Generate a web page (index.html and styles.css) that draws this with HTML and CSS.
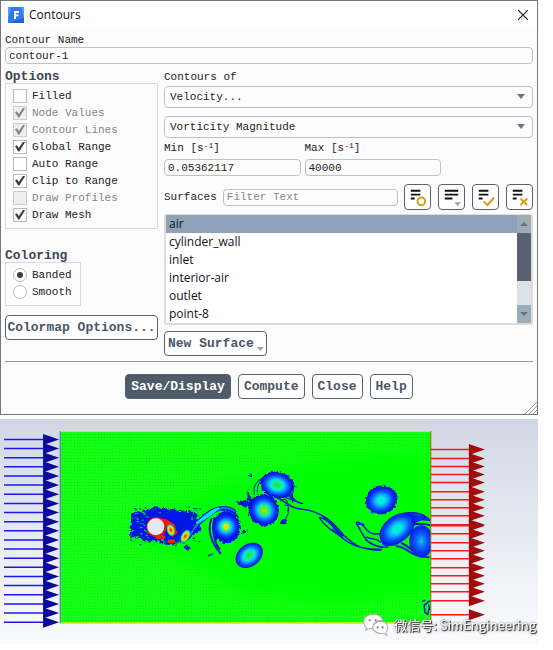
FILE: index.html
```html
<!DOCTYPE html>
<html lang="en">
<head>
<meta charset="utf-8">
<title>Contours</title>
<link rel="stylesheet" href="styles.css">
</head>
<body>
<main class="dialog">
  <header class="titlebar">
    <svg class="app-icon" viewBox="0 0 16 16" aria-hidden="true">
      <rect width="16" height="16" fill="#2f7be8"/>
      <path d="M0 0h3L0 12zM13 0h3v12z" fill="#5a9cf4"/>
      <path d="M0 16l16-5v5z" fill="#1f62c8"/>
      <path d="M6 4h5v2H8v1.500h2.500v1.800H8V12H6z" fill="#fff"/>
    </svg>
    <h1 class="title">Contours</h1>
    <button class="close" aria-label="Close window">
      <svg viewBox="0 0 10 10" width="10" height="10"><path d="M0 0l10 10M10 0L0 10" stroke="#222" stroke-width="1.200"/></svg>
    </button>
  </header>

  <form class="content">
    <label class="label" for="name">Contour Name</label>
    <input class="field" id="name" type="text" value="contour-1">

    <div class="columns">
      <div class="side">
        <h2 class="heading">Options</h2>
        <div class="group">
          <label class="check"><input type="checkbox">Filled</label>
          <label class="check off"><input type="checkbox" checked disabled>Node Values</label>
          <label class="check off"><input type="checkbox" checked disabled>Contour Lines</label>
          <label class="check"><input type="checkbox" checked>Global Range</label>
          <label class="check"><input type="checkbox">Auto Range</label>
          <label class="check"><input type="checkbox" checked>Clip to Range</label>
          <label class="check off"><input type="checkbox" disabled>Draw Profiles</label>
          <label class="check"><input type="checkbox" checked>Draw Mesh</label>
        </div>
        <h2 class="heading coloring">Coloring</h2>
        <div class="group fit">
          <label class="check"><input type="radio" name="coloring" checked>Banded</label>
          <label class="check"><input type="radio" name="coloring">Smooth</label>
        </div>
        <button type="button" class="button colormap">Colormap Options...</button>
      </div>

      <div class="main">
        <label class="label" for="of">Contours of</label>
        <div class="dropdown"><select id="of"><option>Velocity...</option></select></div>
        <div class="dropdown"><select aria-label="Quantity"><option>Vorticity Magnitude</option></select></div>
        <div class="range">
          <div class="cell"><label class="label" for="min">Min [s<sup>-1</sup>]</label><input class="field" id="min" type="text" value="0.05362117"></div>
          <div class="cell"><label class="label" for="max">Max [s<sup>-1</sup>]</label><input class="field" id="max" type="text" value="40000"></div>
        </div>
        <div class="surfaces">
          <label class="label" for="filter">Surfaces</label>
          <input class="field filter" id="filter" type="text" placeholder="Filter Text">
          <div class="tools">
            <button type="button" class="tool" aria-label="Toggle shown"><svg viewBox="0 0 26 26"><path d="M6 6h10M6 10h10M6 14h4" class="bars"/><circle cx="17" cy="17" r="4" class="gold"/></svg></button>
            <button type="button" class="tool" aria-label="List options"><svg viewBox="0 0 26 26"><path d="M6 6h14M6 10h14M6 14h8" class="bars"/><path d="M16 18h7l-3.500 4z" fill="#9aa3ae"/></svg></button>
            <button type="button" class="tool" aria-label="Select all"><svg viewBox="0 0 26 26"><path d="M6 6h10M6 10h10M6 14h4" class="bars"/><path d="M11 17l4 4 7-8" class="gold"/></svg></button>
            <button type="button" class="tool" aria-label="Deselect all"><svg viewBox="0 0 26 26"><path d="M6 6h10M6 10h10M6 14h4" class="bars"/><path d="M14 14l7 7M21 14l-7 7" class="gold"/></svg></button>
          </div>
        </div>
        <div class="list">
          <ul class="items" role="listbox" aria-label="Surfaces">
            <li role="option" aria-selected="true">air</li>
            <li role="option">cylinder_wall</li>
            <li role="option">inlet</li>
            <li role="option">interior-air</li>
            <li role="option">outlet</li>
            <li role="option">point-8</li>
          </ul>
          <div class="scroll" aria-hidden="true">
            <div class="arrow"></div><div class="thumb"></div><div class="track"></div><div class="arrow down"></div>
          </div>
        </div>
        <button type="button" class="button menu">New Surface</button>
      </div>
    </div>

    <footer class="actions">
      <button type="button" class="button primary">Save/Display</button>
      <button type="button" class="button">Compute</button>
      <button type="button" class="button">Close</button>
      <button type="button" class="button">Help</button>
    </footer>
  </form>
  <svg class="grip" viewBox="0 0 12 12" aria-hidden="true"><path d="M0 12L12 0M4 12l8-8M8 12l4-4" stroke="#999" fill="none"/></svg>
</main>

<svg class="plot" viewBox="0 419 537 225" role="img" aria-label="Vorticity contours behind a cylinder">
  <defs>
    <linearGradient id="sky" x2="0" y2="1"><stop offset="0" stop-color="#d1d7e5"/><stop offset=".75" stop-color="#f1f3f8"/><stop offset="1" stop-color="#fafbfd"/></linearGradient>
    <radialGradient id="hot"><stop offset="0" stop-color="#ffb000"/><stop offset=".14" stop-color="#f4ee00"/><stop offset=".28" stop-color="#50f060"/><stop offset=".42" stop-color="#00d8ff"/><stop offset=".6" stop-color="#1478ff"/><stop offset=".78" stop-color="#0a30ff"/><stop offset="1" stop-color="#0010e0"/></radialGradient>
    <radialGradient id="warm"><stop offset="0" stop-color="#a0f000"/><stop offset=".25" stop-color="#60e830"/><stop offset=".42" stop-color="#00e0e8"/><stop offset=".62" stop-color="#1478ff"/><stop offset=".8" stop-color="#0a30ff"/><stop offset="1" stop-color="#0010e0"/></radialGradient>
    <radialGradient id="mild"><stop offset="0" stop-color="#10e830"/><stop offset=".2" stop-color="#20ec60"/><stop offset=".42" stop-color="#00e8f0"/><stop offset=".65" stop-color="#1478ff"/><stop offset=".85" stop-color="#0a30ff"/><stop offset="1" stop-color="#0010d0"/></radialGradient>
    <radialGradient id="cool"><stop offset="0" stop-color="#00f0b0"/><stop offset=".22" stop-color="#00f0e8"/><stop offset=".45" stop-color="#10a8ff"/><stop offset=".7" stop-color="#0a50ff"/><stop offset="1" stop-color="#0010e0"/></radialGradient>
    <radialGradient id="cold"><stop offset="0" stop-color="#20e040"/><stop offset=".12" stop-color="#10a0ff"/><stop offset=".5" stop-color="#0a58ff"/><stop offset="1" stop-color="#0018e0"/></radialGradient>
    <radialGradient id="core"><stop offset="0" stop-color="#ff2000"/><stop offset=".35" stop-color="#ff9000"/><stop offset=".6" stop-color="#e8f000"/><stop offset=".82" stop-color="#20e870"/><stop offset="1" stop-color="#00a0ff"/></radialGradient>
    <pattern id="mesh" width="3" height="3" patternUnits="userSpaceOnUse"><rect width="1" height="1" fill="#fff" opacity=".3"/><rect y="1" width="3" height="1" fill="#fff" opacity=".1"/></pattern>
    <mask id="edges">
      <rect x="60" y="431" width="370" height="192" fill="#fff"/>
      <path d="M118 527L240 478 340 455 430 450V592L340 604 240 592z" fill="#000" filter="url(#soft)"/>
    </mask>
    <clipPath id="domain"><rect x="60" y="431" width="370" height="192"/></clipPath>
    <filter id="soft" x="-10%" y="-20%" width="120%" height="140%"><feGaussianBlur stdDeviation="8"/></filter>
    <filter id="rough" x="-10%" y="-10%" width="120%" height="120%"><feTurbulence type="fractalNoise" baseFrequency=".35" numOctaves="2" seed="4"/><feDisplacementMap in="SourceGraphic" scale="5" xChannelSelector="R" yChannelSelector="G"/></filter>
  </defs>
  <rect y="419" width="537" height="225" fill="url(#sky)"/>
  <g id="inlet"></g>
  <g id="outlet"></g>
  <rect x="60" y="431" width="370" height="192" fill="#00ff00"/>
  <rect x="60" y="431" width="370" height="192" fill="url(#mesh)" mask="url(#edges)"/>
  <g clip-path="url(#domain)">
    <g filter="url(#rough)">
      <path d="M131 513l15-3 8-3 11 1 17 2 14 2 2 9 3 9-4 3-9 3-6 6-15 3-10-4-10 0-11-3-6 0z" fill="#0018e8"/>
      <ellipse cx="226" cy="527" rx="14" ry="16" fill="#0018e8"/>
      <ellipse cx="263" cy="510" rx="15" ry="16" fill="#0018e8" transform="rotate(-35 263 510)"/>
      <ellipse cx="277" cy="485" rx="17" ry="13" fill="#0018e8" transform="rotate(15 277 485)"/>
      <ellipse cx="381" cy="500" rx="16" ry="14" fill="#0018e8" transform="rotate(-20 381 500)"/>
      <path d="M235 501l10-1 7 4-8 4zM247 489l4 10 4 4-8-2zM280 519l6 0-1 6-5-2zM240 532l8-3-3 5zM207 554h6v2h-6zM184 545l7 2-2 4-4-2zM249 474h3v3h-3z" fill="#0018d0"/>
    </g>
    <g id="specks"></g>
    <g fill="none" stroke="#0820c8" stroke-linecap="round">
      <path d="M211 519c-4 10-1 23 9 34M214 518c-3 12 0 24 5 31M222 510c5-2 10 1 15 6" stroke-width="2"/>
      <path d="M254 494c-2-8 3-15 12-18M257 492c-1-7 3-12 7-14M291 480c5 8-1 14 1 22M284 505c7-2 4 10 1 13M280 501c6-6 9 3 7 10"/>
      <path d="M290 492c2 8 8 12 12 11M278 495c8 2 10 4 22 8M280 490c9 4 12 11 20 13" stroke-width="1.500"/>
      <path d="M278 498c10 6 14 11 24 11 18 2 30 12 41 26 12 11 19 15 37 15M319 517c10 2 14 12 23 20M319 518c5 7 13 14 22 18M332 529c14 15 28 21 49 20M322 516c9 5 13 13 20 20" stroke-width="1.500"/>
      <path d="M356 524h7M363 525c-8-5-9-4-5 2 8 16 12 18 23 20M361 524c6 6 8 12 20 9M366 537c5 3 9 0 14 5M365 540c8 5 13 7 22 7" stroke-width="1.500"/>
      <path d="M398 515c12-5 24-2 31 5M404 521c9-6 17-5 25-1M413 524c6-1 10-1 16 1M396 546c10 0 13 11 32 11M401 543c7 3 11 8 15 11" stroke-width="2"/>
      <path d="M422 601l2-1M430 601c-5-1-3 4-6 3-2 2 1 5 0 8l3 2 1-5M428 605l1 4" stroke-width="1.500"/>
    </g>
    <path d="M174 540c10 1 17-8 22-18 5-6 18-19 33-15 6 2 7 4 6 6-9-6-18-4-24 2-11 8-16 12-19 19-3 6-8 9-18 6z" fill="#1478f8" stroke="#0018d0"/>
    <path d="M196 523c8-5 11-11 22-15-6 6-10 9-22 15" stroke="#00e8e8" fill="none" stroke-width="2"/>
    <circle cx="156" cy="527" r="10" fill="#f01008"/>
    <path d="M155 517l11 2 8 5 3 9-5 4-4-7-3-6zM153 535l11 0 2 3-9 1z" fill="#ff1808"/>
    <ellipse cx="170.500" cy="530" rx="4" ry="6" fill="url(#core)" transform="rotate(-18 170 530)"/>
    <ellipse cx="185" cy="536" rx="4" ry="7" fill="url(#core)" transform="rotate(30 185 536)"/>
    <ellipse cx="171" cy="541" rx="4" ry="2" fill="#ff2008"/>
    <circle cx="155.500" cy="526.500" r="8.500" fill="#e6e8f1"/>
    <circle cx="225.500" cy="526.500" r="13" fill="url(#hot)"/>
    <ellipse cx="263.500" cy="510.500" rx="14" ry="15" fill="url(#warm)" transform="rotate(-35 263 510)"/>
    <ellipse cx="276.500" cy="485" rx="16" ry="12" fill="url(#mild)" transform="rotate(15 277 485)"/>
    <ellipse cx="248.500" cy="555.500" rx="15" ry="11" fill="url(#mild)" transform="rotate(-38 248 555)"/>
    <ellipse cx="380.500" cy="500" rx="15" ry="13" fill="url(#cool)" transform="rotate(-20 381 500)"/>
    <path d="M380 540c-3-12 8-23 22-27 14 0 22 3 26 8-12-3-16 4-18 10-6 10-16 18-28 14z" fill="#0828f0"/>
    <ellipse cx="396.500" cy="529" rx="20" ry="13" fill="url(#cool)" transform="rotate(-38 396 529)"/>
    <ellipse cx="420.500" cy="541" rx="12" ry="16" fill="url(#cold)"/>
  </g>
  <path d="M60 431.500H430M60 622.500H430" stroke="#d8f000"/>
  <path d="M60 431V623" stroke="#6868c8"/>
  <path d="M430 431V623" stroke="#a06818"/>
  <g class="wechat">
    <path d="M372 614c-5 0-9 3-9 7 0 3 1 5 3 6l-1 3 4-2h4c-1-5 2-8 9-8-1-4-5-6-10-6z"/>
    <path d="M380 621c-4 0-8 3-8 6s4 6 8 6l3 0 3 2-1-3c1-1 2-3 2-5 0-3-3-6-7-6z"/>
    <g fill="#777" stroke="none"><circle cx="369" cy="620" r="1"/><circle cx="375" cy="620" r="1"/><circle cx="377" cy="627" r="1"/><circle cx="382" cy="627" r="1"/></g>
  </g>
  <text class="credit" x="535" y="630" text-anchor="end">微信号: SimEngineering</text>
</svg>
<script src="plot.js"></script>
</body>
</html>
```
FILE: styles.css
```css
* { box-sizing: border-box; }

body {
  margin: 0;
  padding-right: 15px;
  background: #fff;
  color: #222;
  font: 11px/14px "Liberation Mono", monospace;
}

.dialog {
  position: relative;
  border: 1px solid #777;
  background: #fcfcfd;
}

.titlebar {
  display: flex;
  align-items: center;
  gap: 5px;
  height: 28px;
  padding: 0 9px 0 7px;
  background: #fff;
}
.app-icon { width: 16px; height: 16px; }
.title { flex: 1; margin: 0; font: 12px/16px "Open Sans", sans-serif; color: #111; }
.close { display: flex; padding: 0; border: 0; background: none; }

.content { padding: 4px 4px 15px; }
.label { display: block; white-space: nowrap; }
sup { font-size: 8px; line-height: 8px; vertical-align: 3px; }

button, input, select { font: inherit; color: inherit; }

.field {
  display: block;
  width: 100%;
  height: 17px;
  padding: 0 3px;
  border: 1px solid #b8c2d4;
  border-radius: 4px;
  background: #fdfdfd;
}
.field::placeholder { color: #888; opacity: 1; }

.columns { display: flex; gap: 6px; margin-top: 6px; }
.side { flex: 0 0 153px; }
.main { flex: 1; min-width: 0; }

.heading { margin: 0; font-size: 13px; line-height: 13px; color: #3d4856; }
.coloring { margin-top: 20px; }

.group { padding: 3px 7px 5px; border: 1px solid #d3daea; }
.fit { width: 76px; }

.check { display: flex; align-items: center; gap: 5px; height: 17px; white-space: nowrap; }
.check input {
  display: grid;
  place-items: center;
  appearance: none;
  flex: none;
  width: 14px;
  height: 14px;
  margin: 0;
  border: 1px solid #bbb;
  background: #fff;
}
.check input:checked::before {
  content: "";
  width: 10px;
  height: 10px;
  background: #3c3f44;
  clip-path: polygon(0 48%, 20% 38%, 38% 65%, 82% 0, 100% 8%, 44% 100%, 32% 100%);
}
.check input[type="radio"], .check input[type="radio"]::before { border-radius: 50%; }
.check input[type="radio"]:checked::before { width: 6px; height: 6px; clip-path: none; }
.off { color: #858585; }
.off input { background: #eee; border-color: #ccc; }
.check.off input:checked::before { background: #888; }

.button {
  height: 25px;
  padding: 0 5px;
  border: 1px solid #58626f;
  border-radius: 4px;
  background: #fff;
  color: #4b5665;
  font-size: 13px;
  font-weight: bold;
  white-space: nowrap;
}
.colormap { width: 100%; margin-top: 9px; padding: 0; }
.primary { background: #505b69; color: #fff; }

.dropdown { position: relative; margin-bottom: 8px; }
.main > .label { margin-bottom: 2px; }
.dropdown select {
  display: block;
  appearance: none;
  width: 100%;
  height: 22px;
  padding: 0 5px;
  border: 1px solid #b8c2d4;
  border-radius: 4px;
  background: #fdfdfd;
}
.dropdown::after {
  content: "";
  position: absolute;
  top: 8px;
  right: 8px;
  width: 8px;
  height: 5px;
  background: #687383;
  clip-path: polygon(0 0, 100% 0, 50% 100%);
}

.range { display: flex; gap: 4px; margin-top: -5px; }
.cell { flex: 0 0 37%; }
.cell .label { margin-bottom: 4px; }

.surfaces { display: flex; align-items: center; gap: 6px; margin-top: 8px; }
.filter { flex: 1; min-width: 0; }
.tools { display: flex; gap: 7px; }
.tool {
  width: 27px;
  height: 26px;
  padding: 0;
  border: 1px solid #58626f;
  border-radius: 4px;
  background: #fff;
}
.tool svg { display: block; width: 100%; }
.bars { stroke: #111; stroke-width: 2; fill: none; }
.gold { stroke: #d69a18; stroke-width: 2; fill: none; }

.list {
  display: flex;
  margin-top: 4px;
  border: solid #dcdcdc;
  border-width: 1px 2px 2px;
  border-radius: 3px;
  background: #fff;
}
.items { flex: 1; margin: 0; padding: 0; list-style: none; font: 12px/18px "Open Sans", sans-serif; color: #111; }
.items li { padding: 0 3px; }
.items li[aria-selected="true"] { background: #8da3b8; }
.scroll { display: flex; flex-direction: column; width: 14px; }
.arrow { display: grid; place-items: center; height: 18px; background: #9cadb5; }
.arrow::before { content: ""; width: 8px; height: 4px; background: #68727e; clip-path: polygon(50% 0, 100% 100%, 0 100%); }
.down::before { clip-path: polygon(0 0, 100% 0, 50% 100%); }
.thumb { flex: 2; background: #596070; }
.track { flex: 1; background: #dce2e5; }

.menu { position: relative; display: block; margin-top: 6px; padding: 0 12px 0 3px; }
.menu::after {
  content: "";
  position: absolute;
  right: 2px;
  bottom: 4px;
  width: 7px;
  height: 4px;
  background: #9aa3ae;
  clip-path: polygon(0 0, 100% 0, 50% 100%);
}

.actions {
  display: flex;
  justify-content: center;
  gap: 7px;
  margin-top: 5px;
  padding-top: 12px;
  border-top: 1px solid #999;
}
.grip { position: absolute; right: 0; bottom: 0; width: 12px; height: 12px; }

.plot { display: block; width: 100%; margin-top: 4px; }
.wechat { fill: #fff; stroke: #aaa; stroke-width: 1; }
.credit {
  font: 13px "Noto Sans CJK SC", sans-serif;
  fill: #fff;
  filter: drop-shadow(1px 1px 0 #444) drop-shadow(0 0 1px #777);
}
```
FILE: plot.js
```js
const NS = "http://www.w3.org/2000/svg";

function draw(parent, name, attributes) {
  const node = document.createElementNS(NS, name);
  for (const key in attributes) node.setAttribute(key, attributes[key]);
  document.getElementById(parent).appendChild(node);
}

function arrow(parent, x, y, line, head) {
  draw(parent, "path", { d: `M${x} ${y}h40`, stroke: line, "stroke-width": 1.5 });
  draw(parent, "path", { d: `M${x + 39} ${y - 5.5}l16 5.500-16 5.500z`, fill: head });
}

for (let i = 0; i < 21; i++) arrow("inlet", 4, 439.4 + i * 9.12, "#1818f0", "#0b0b9b");

const outletRows = [449, 458, 466, 474, 482, 491, 499, 507, 515, 524, 525, 533, 542, 550, 558, 567, 575, 583, 591, 600, 614];
for (const y of outletRows) arrow("outlet", 429, y + 0.5, "#f81818", "#a30c0c");

let seed = 7;
function random() {
  seed = (seed * 16807) % 2147483647;
  return seed / 2147483647;
}

for (let i = 0; i < 130; i++) {
  const x = 131 + random() * 68;
  const y = 509 + random() * 35;
  const inner = x > 148 && x < 190 && y > 513 && y < 538;
  if (!inner) draw("specks", "rect", { x, y, width: 1 + random() * 2, height: 1, fill: "#00e818" });
}

for (let i = 0; i < 60; i++) {
  draw("specks", "rect", { x: 130 + random() * 72, y: 506 + random() * 40, width: 2, height: 1, fill: "#0018b0" });
}
```
